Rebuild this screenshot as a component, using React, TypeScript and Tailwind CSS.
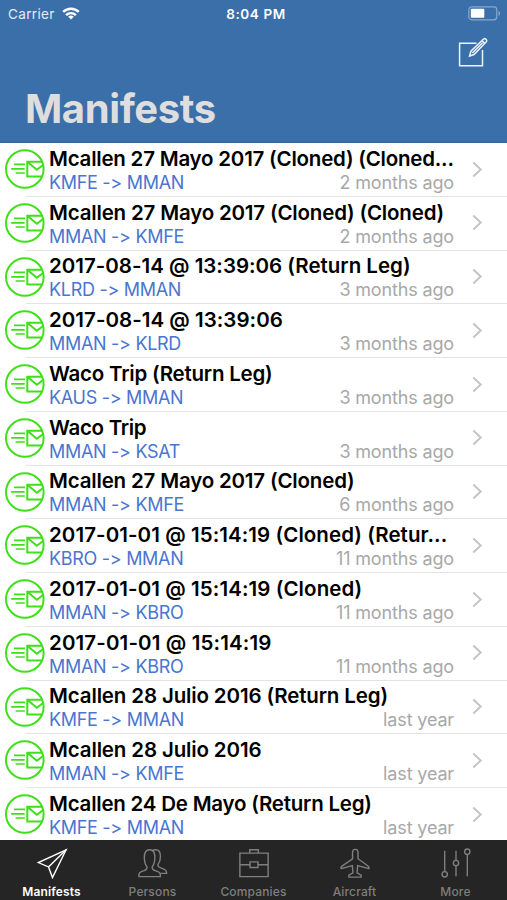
import { ReactNode } from "react";

type Manifest = {
  title: string;
  tracking: string;
  route: string;
  age: string;
};

const manifests: Manifest[] = [
  { title: "Mcallen 27 Mayo 2017 (Cloned) (Cloned...", tracking: "tracking-[-0.22px]", route: "KMFE -> MMAN", age: "2 months ago" },
  { title: "Mcallen 27 Mayo 2017 (Cloned) (Cloned)", tracking: "tracking-[-0.18px]", route: "MMAN -> KMFE", age: "2 months ago" },
  { title: "2017-08-14 @ 13:39:06 (Return Leg)", tracking: "tracking-[0px]", route: "KLRD -> MMAN", age: "3 months ago" },
  { title: "2017-08-14 @ 13:39:06", tracking: "tracking-[0.03px]", route: "MMAN -> KLRD", age: "3 months ago" },
  { title: "Waco Trip (Return Leg)", tracking: "tracking-[-0.22px]", route: "KAUS -> MMAN", age: "3 months ago" },
  { title: "Waco Trip", tracking: "tracking-[-0.3px]", route: "MMAN -> KSAT", age: "3 months ago" },
  { title: "Mcallen 27 Mayo 2017 (Cloned)", tracking: "tracking-[-0.18px]", route: "MMAN -> KMFE", age: "6 months ago" },
  { title: "2017-01-01 @ 15:14:19 (Cloned) (Retur...", tracking: "tracking-[0.07px]", route: "KBRO -> MMAN", age: "11 months ago" },
  { title: "2017-01-01 @ 15:14:19 (Cloned)", tracking: "tracking-[0.08px]", route: "MMAN -> KBRO", age: "11 months ago" },
  { title: "2017-01-01 @ 15:14:19", tracking: "tracking-[0.13px]", route: "MMAN -> KBRO", age: "11 months ago" },
  { title: "Mcallen 28 Julio 2016 (Return Leg)", tracking: "tracking-[-0.14px]", route: "KMFE -> MMAN", age: "last year" },
  { title: "Mcallen 28 Julio 2016", tracking: "tracking-[-0.14px]", route: "MMAN -> KMFE", age: "last year" },
  { title: "Mcallen 24 De Mayo (Return Leg)", tracking: "tracking-[-0.22px]", route: "KMFE -> MMAN", age: "last year" },
];

function SentIcon() {
  return (
    <svg className="h-10 w-10 shrink-0" viewBox="0 0 40 40" fill="none" stroke="#3fe01a" strokeWidth="2">
      <circle cx="19.8" cy="20" r="18.8" />
      <path d="M37 12.8H22.3v14.8H37M22.3 12.8l9.5 8 6-4.6" />
      <path d="M9 15.4h11M6.2 19.8h13.4M10.6 24h9.2" strokeWidth="1.7" />
    </svg>
  );
}

function ManifestRow({ manifest }: { manifest: Manifest }) {
  return (
    <li className="flex h-[53.75px] shrink-0 pl-[5px]">
      <div className="pt-[6px]">
        <SentIcon />
      </div>
      <div className="relative flex min-w-0 flex-1 pl-[4px]">
        <div className="w-[405px] shrink-0 pt-[2.75px]">
          <p className={`h-[26px] text-[20.5px] leading-[26px] font-semibold whitespace-nowrap text-black ${manifest.tracking}`}>
            {manifest.title}
          </p>
          <div className="flex justify-between text-[18px] leading-[22.5px]">
            <span className="tracking-[-0.3px] text-[#4a75d0]">{manifest.route}</span>
            <span className="tracking-[-0.15px] text-[#a8a8a8]">{manifest.age}</span>
          </div>
        </div>
        <svg className="mt-[17.5px] ml-[18px] h-[17px] w-[11px]" viewBox="0 0 11 17" fill="none" stroke="#c5c5c9" strokeWidth="2">
          <path d="M1.3 1.5 8.7 8.5 1.3 15.5" />
        </svg>
        <div className="absolute right-0 bottom-0 -left-[19px] h-px bg-[#e3e3e4]" />
      </div>
    </li>
  );
}

function Tab({ label, active, children }: { label: string; active?: boolean; children: ReactNode }) {
  return (
    <button
      type="button"
      className={
        active
          ? "flex w-[101px] flex-col items-center font-semibold text-white"
          : "flex w-[101px] flex-col items-center font-medium text-[#7f7f7f]"
      }
    >
      <svg className="mt-[6.5px] h-[32px] w-[32px]" viewBox="0 0 34 34" fill="none" stroke="currentColor" strokeWidth="1.5">
        {children}
      </svg>
      <span className="mt-[5.5px] text-[12px] leading-[16px] tracking-[0.15px]">{label}</span>
    </button>
  );
}

export default function App() {
  return (
    <div
      className="flex h-[900px] w-[507px] flex-col overflow-hidden bg-white"
      style={{ fontFamily: 'Inter, "Liberation Sans", sans-serif', fontFeatureSettings: '"calt" 0' }}
    >
      <header className="flex h-[143px] shrink-0 flex-col border-b border-[#346399] bg-[#3b6fa9]">
        <div className="grid h-[28px] grid-cols-3 items-center pr-[6px] pl-[8px] text-[13.5px] text-white">
          <div className="flex items-center gap-[7px] text-[#e3ecf5]">
            <span className="tracking-[0.35px]">Carrier</span>
            <svg className="-mt-[2px] h-[13px] w-[18px]" viewBox="0 0 18 13" fill="none" stroke="#fff" strokeWidth="2.4">
              <path d="M1.2 4.9a11.2 11.2 0 0 1 15.6 0M4.1 8.1a7 7 0 0 1 9.8 0" />
              <path d="M9 12.6 6.2 9.8a4 4 0 0 1 5.6 0z" fill="#fff" stroke="none" />
            </svg>
          </div>
          <span className="pl-[3px] text-center font-semibold tracking-[0.6px]">8:04 PM</span>
          <svg className="-mt-[2px] h-[15px] w-[33px] justify-self-end" viewBox="0 0 33 15" fill="none">
            <rect x="0.8" y="0.8" width="28" height="13" rx="3" stroke="#86a8cc" strokeWidth="1.2" />
            <rect x="2.8" y="2.8" width="13.5" height="9" rx="1" fill="#fff" />
            <path d="M30.5 5v5c2-.8 2-4.2 0-5z" fill="#86a8cc" />
          </svg>
        </div>
        <button type="button" className="mt-[9px] mr-[19px] self-end text-[#eaf2fa]">
          <svg className="h-[31px] w-[30px]" viewBox="0 0 30 31" fill="none" stroke="currentColor" strokeWidth="1.5">
            <path d="M18.5 6.2H1.6v22.6h22.9V13" />
            <path d="m11.6 19 1.3-4.8L25.6 2c1.6-1.2 3.9 1.2 2.7 2.7L16 17.5z" />
            <path d="m24 3.6 2.7 2.7M14.4 16 24.5 5.7" />
          </svg>
        </button>
        <h1 className="mt-[16px] pl-[25px] text-[40px] leading-[50px] font-bold tracking-[-0.4px] text-[#dedede]">Manifests</h1>
      </header>

      <ul className="flex min-h-0 flex-1 flex-col overflow-hidden">
        {manifests.map((manifest, i) => (
          <ManifestRow key={i} manifest={manifest} />
        ))}
      </ul>

      <nav className="flex h-[60px] shrink-0 bg-[#252525] pl-[1px]">
        <Tab label="Manifests" active>
          <path d="M32 3 2.5 16.5l10.8 4.7L17.5 32.500z" />
          <path d="M32 3 13.3 21.2" />
        </Tab>
        <Tab label="Persons">
          <path d="M2 31.500c-.5-4.500 1.500-5 5-6.200 3.500-1.200 4-2.300 3.600-4.300-2.600-2.800-2.800-6-2.800-10C7.800 5.500 10 3 13.500 3S19 5.500 19 11c0 4-.4 7.200-2.800 10-.4 2 .1 3.100 3.600 4.300 3.500 1.200 5.500 1.700 5 6.200z" />
          <path d="M16.500 3.800c1-.6 2-.8 3.200-.8 3.300 0 5.200 2.500 5.200 7 0 3.600-.5 6-2.600 8.500-.4 2 .2 2.800 3.700 4 3.500 1.200 5.500 2 5.500 5.500h-6.800" />
        </Tab>
        <Tab label="Companies">
          <path d="M2 6.500h30v25H2zM12.500 6.500V3h9v3.500M2 18.800h10.800M21.200 18.800H32M12.800 15.800h8.400v6h-8.400z" />
        </Tab>
        <Tab label="Aircraft">
          <path d="M17 2.500c-1.800 0-2.600 2-2.600 4v6L2.800 20.500c-.8.6-.8 1.300-.6 2.500l12-3.200.6 7.700-4.300 2.500v2h13v-2l-4.300-2.500.6-7.700 12 3.200c.2-1.200.2-1.900-.6-2.500l-11-8v-6c0-2-.8-4-2.600-4z" />
        </Tab>
        <Tab label="More">
          <path d="M5 4v22M17 4v10M17 20v11M29 8v23" />
          <circle cx="5" cy="29" r="2.8" />
          <circle cx="17" cy="17" r="2.8" />
          <circle cx="29" cy="5" r="2.8" />
        </Tab>
      </nav>
    </div>
  );
}
